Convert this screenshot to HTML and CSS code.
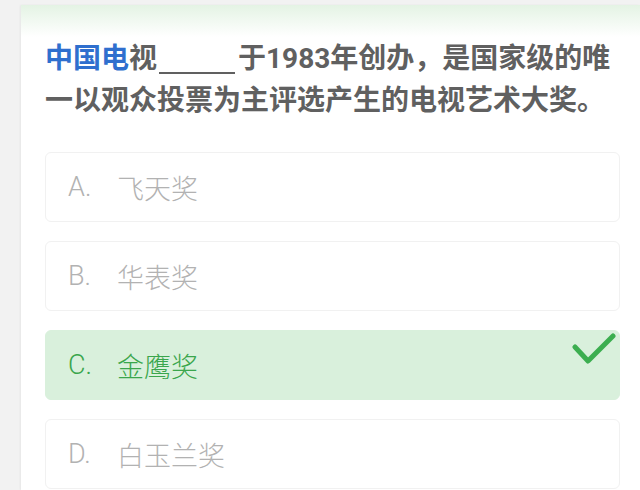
FILE: index.html
```html
<!DOCTYPE html>
<html>
  <head>
    <title>答题</title>
    <meta charset="utf-8" />
    <meta name="viewport" content="width=device-width, initial-scale=1" />
    <link rel="stylesheet" href="styles.css">
  </head>
  <body>
    <div class="card">
      <!-- question -->
      <p class="question"><span class="hl">中国电</span>视<span class="blank"></span>于1983年创办，是国家级的唯一以观众投票为主评选产生的电视艺术大奖。</p>

      <!-- options -->
      <div class="options">
        <div class="option"><span class="key">A.</span>飞天奖</div>
        <div class="option"><span class="key">B.</span>华表奖</div>
        <div class="option right">
          <span class="key">C.</span>金鹰奖
          <svg class="check" width="48" height="36" viewBox="0 0 48 36">
            <polyline points="7,15 20,29 45,4" fill="none" stroke="#3cae50" stroke-width="5" stroke-linecap="round" stroke-linejoin="round" />
          </svg>
        </div>
        <div class="option"><span class="key">D.</span>白玉兰奖</div>
      </div>
    </div>
  </body>
</html>
```

FILE: styles.css
```css
html,
body {
  height: 100%;
}

body {
  margin: 0;
  background: #f2f2f2;
  font-family: Roboto, "Noto Sans CJK SC", sans-serif;
  overflow: hidden;
}

.card {
  box-sizing: border-box;
  height: calc(100% - 5px);
  margin: 5px 0 0 21px;
  padding: 33px 20px 0 24px;
  background: linear-gradient(#e4f3e4, #ffffff 32px);
  box-shadow: -1px 0 2px rgba(0, 0, 0, 0.05);
}

.question {
  margin: 0;
  font-size: 28px;
  line-height: 42px;
  font-weight: 700;
  color: #606060;
}

.question .hl {
  color: #2f6fce;
}

.question .blank {
  display: inline-block;
  width: 76px;
  height: 26px;
  margin: 0 3px 0 2px;
  border-bottom: 2px solid #606060;
  vertical-align: -6px;
}

.options {
  margin-top: 30px;
  display: flex;
  flex-direction: column;
  gap: 19px;
}

.option {
  position: relative;
  height: 70px;
  box-sizing: border-box;
  display: flex;
  align-items: center;
  padding-left: 22px;
  border: 1px solid #f1f1f1;
  border-radius: 6px;
  background: #ffffff;
  font-size: 27px;
  font-weight: 300;
  color: #b2b2b2;
}

.option .key {
  width: 49px;
}

.option.right {
  background: #d9f0dc;
  border-color: #d9f0dc;
  color: #3aa64c;
}

.check {
  position: absolute;
  right: 3px;
  top: 1px;
}
```
